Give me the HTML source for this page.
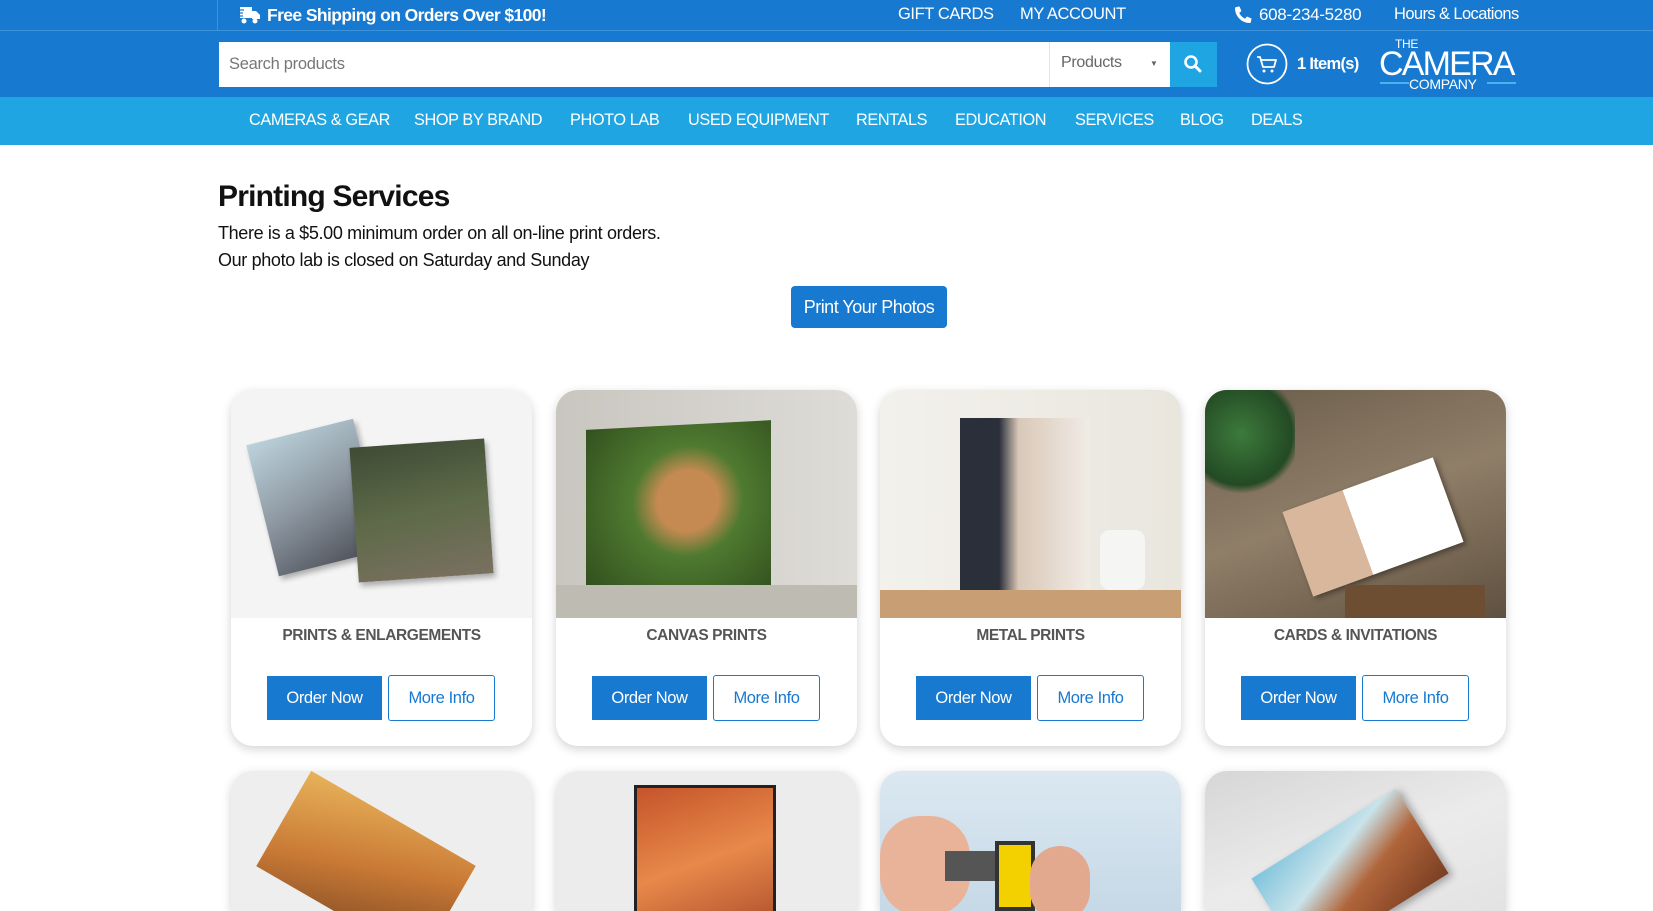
<!DOCTYPE html>
<html style="width:1653px;height:911px;overflow:hidden"><head><meta charset="utf-8"><style>
*{margin:0;padding:0;box-sizing:border-box}
body{width:1653px;height:911px;overflow:hidden;background:#fff;font-family:"Liberation Sans",Arial,sans-serif;position:relative}
.abs{position:absolute}
.top{left:0;top:0;width:1653px;height:31px;background:#1779d0;border-bottom:1px solid #3d92dc}
.hdr{left:0;top:31px;width:1653px;height:66px;background:#1779d0}
.nav{left:0;top:97px;width:1653px;height:48px;background:#1ea5e2}
.t{color:#fff;white-space:nowrap}
.nav .t{top:14px;font-size:16.3px;letter-spacing:-0.4px}
.card{width:301px;height:356px;border-radius:22px;background:#fff;box-shadow:0 3px 10px rgba(0,0,0,.18);overflow:hidden}
.r2{height:140px;border-radius:22px 22px 0 0}
.card .img{position:absolute;left:0;top:0;width:301px;height:228px}
.card .ttl{position:absolute;left:0;top:237px;width:301px;text-align:center;font-weight:bold;font-size:15.5px;color:#555;letter-spacing:-0.4px}
.on{position:absolute;left:36px;top:286px;width:115px;height:44px;background:#1779d0;color:#fff;font-size:16.5px;text-align:center;line-height:44px;letter-spacing:-0.4px}
.mi{position:absolute;left:157px;top:285px;width:107px;height:46px;border:1.5px solid #1779d0;border-radius:3px;color:#1779d0;font-size:16.5px;text-align:center;line-height:45px;letter-spacing:-0.4px}
</style></head><body>
<div class="abs top"></div>
<div class="abs" style="left:217px;top:0;width:1px;height:30px;background:#3d92dc"></div>
<svg class="abs" style="left:237px;top:5px" width="24" height="20" viewBox="0 0 24 20"><path d="M3 2h12v11H3z M15 6h4l4 4v4h-8z" fill="#fff"/><circle cx="7" cy="16" r="2.5" fill="#fff"/><circle cx="18" cy="16" r="2.5" fill="#fff"/><path d="M0 5h7M0 8h6M1 11h5" stroke="#1779d0" stroke-width="1.3"/></svg>
<div class="abs t" style="left:267px;top:5px;font-size:17.5px;font-weight:bold;letter-spacing:-0.6px">Free Shipping on Orders Over $100!</div>
<div class="abs t" style="left:898px;top:5px;font-size:16.5px;letter-spacing:-0.4px">GIFT CARDS</div>
<div class="abs t" style="left:1020px;top:5px;font-size:16.5px;letter-spacing:-0.4px">MY ACCOUNT</div>
<svg class="abs" style="left:1235px;top:6px" width="17" height="17" viewBox="0 0 16 16"><path d="M15 11.5l-3.2-1.4c-.4-.2-.8 0-1 .3l-1.3 1.6C7 10.8 5.2 9 4 6.5l1.6-1.3c.3-.3.4-.7.3-1L4.5 1c-.2-.4-.6-.6-1-.5L.6 1.2C.3 1.3 0 1.6 0 2c0 7.7 6.3 14 14 14 .4 0 .7-.3.8-.6l.7-3c.1-.4-.1-.8-.5-.9z" fill="#fff"/></svg>
<div class="abs t" style="left:1259px;top:5px;font-size:17px;letter-spacing:-0.3px">608-234-5280</div>
<div class="abs t" style="left:1394px;top:5px;font-size:16.5px;letter-spacing:-0.6px">Hours &amp; Locations</div>

<div class="abs hdr"></div>
<div class="abs" style="left:219px;top:42px;width:830px;height:45px;background:#fff"></div>
<div class="abs" style="left:229px;top:55px;font-size:16.5px;color:#777;letter-spacing:-0.3px">Search products</div>
<div class="abs" style="left:1049px;top:42px;width:121px;height:45px;background:#fff;border-left:1px solid #e3e3e3"></div>
<div class="abs" style="left:1061px;top:54px;font-size:16px;color:#666;letter-spacing:-0.3px">Products</div>
<div class="abs" style="left:1150px;top:59px;font-size:8px;color:#666">▼</div>
<div class="abs" style="left:1170px;top:42px;width:47px;height:45px;background:#1ea5e2"></div>
<svg class="abs" style="left:1183px;top:54px" width="20" height="20" viewBox="0 0 20 20"><circle cx="8" cy="8" r="5.5" stroke="#fff" stroke-width="2.6" fill="none"/><path d="M12 12l5 5" stroke="#fff" stroke-width="3" stroke-linecap="round"/></svg>
<svg class="abs" style="left:1246px;top:43px" width="42" height="42" viewBox="0 0 42 42"><circle cx="21" cy="21" r="19.5" stroke="#fff" stroke-width="1.8" fill="none"/><path d="M11 14h3l3 10h11l2-7H15" stroke="#fff" stroke-width="1.8" fill="none" stroke-linejoin="round"/><circle cx="18" cy="28" r="1.5" fill="#fff"/><circle cx="26" cy="28" r="1.5" fill="#fff"/></svg>
<div class="abs t" style="left:1297px;top:55px;font-size:16.5px;font-weight:bold;letter-spacing:-0.7px">1 Item(s)</div>
<div class="abs t" style="left:1395px;top:37px;font-size:12px;letter-spacing:-0.3px">THE</div>
<div class="abs t" style="left:1379px;top:47px;font-size:34px;font-weight:300;letter-spacing:-1.8px;line-height:34px">CAMERA</div>
<div class="abs" style="left:1380px;top:82px;width:29px;height:2px;background:#4db3ec"></div>
<div class="abs" style="left:1487px;top:82px;width:29px;height:2px;background:#4db3ec"></div>
<div class="abs t" style="left:1409px;top:76px;font-size:14px;letter-spacing:-0.3px">COMPANY</div>

<div class="abs nav">
<div class="abs t" style="left:249px">CAMERAS &amp; GEAR</div>
<div class="abs t" style="left:414px">SHOP BY BRAND</div>
<div class="abs t" style="left:570px">PHOTO LAB</div>
<div class="abs t" style="left:688px">USED EQUIPMENT</div>
<div class="abs t" style="left:856px">RENTALS</div>
<div class="abs t" style="left:955px">EDUCATION</div>
<div class="abs t" style="left:1075px">SERVICES</div>
<div class="abs t" style="left:1180px">BLOG</div>
<div class="abs t" style="left:1251px">DEALS</div>
</div>

<div class="abs" style="left:218px;top:180px;font-size:30px;font-weight:bold;color:#111;letter-spacing:-0.8px">Printing Services</div>
<div class="abs" style="left:218px;top:223px;font-size:18px;color:#111;letter-spacing:-0.35px">There is a $5.00 minimum order on all on-line print orders.</div>
<div class="abs" style="left:218px;top:250px;font-size:18px;color:#111;letter-spacing:-0.35px">Our photo lab is closed on Saturday and Sunday</div>
<div class="abs" style="left:791px;top:286px;width:156px;height:42px;background:#1779d0;border-radius:4px;color:#fff;font-size:18px;text-align:center;line-height:42px;letter-spacing:-0.5px">Print Your Photos</div>

<div class="abs card" style="left:231px;top:390px"><div class="img" style="background:#f4f4f4"><div class="abs" style="left:30px;top:40px;width:110px;height:135px;background:linear-gradient(160deg,#bcd3dc,#8c96a0 50%,#4a4d55);transform:rotate(-14deg);box-shadow:2px 4px 6px rgba(0,0,0,.3)"></div><div class="abs" style="left:123px;top:53px;width:135px;height:135px;background:linear-gradient(170deg,#3f4b35,#5d6a48 50%,#7a7060);transform:rotate(-4deg);box-shadow:2px 4px 6px rgba(0,0,0,.3)"></div></div><div class="ttl">PRINTS &amp; ENLARGEMENTS</div><div class="on">Order Now</div><div class="mi">More Info</div></div>
<div class="abs card" style="left:556px;top:390px"><div class="img" style="background:linear-gradient(90deg,#c9c6c0,#dedcd7)"><div class="abs" style="left:30px;top:35px;width:185px;height:170px;background:radial-gradient(circle at 55% 45%,#c58a52 0 22%,#4f7a30 40%,#2e4a1c);transform:skewY(-3deg)"></div><div class="abs" style="left:0;top:195px;width:301px;height:33px;background:#bebbb3"></div></div><div class="ttl">CANVAS PRINTS</div><div class="on">Order Now</div><div class="mi">More Info</div></div>
<div class="abs card" style="left:880px;top:390px"><div class="img" style="background:linear-gradient(90deg,#f3f1ec,#e9e6de)"><div class="abs" style="left:80px;top:28px;width:130px;height:185px;background:linear-gradient(90deg,#2a2f3a 0 30%,#d9c8b8 45%,#f1ece6)"></div><div class="abs" style="left:0;top:200px;width:301px;height:28px;background:#c89f74"></div><div class="abs" style="left:220px;top:140px;width:45px;height:60px;background:#f5f5f3;border-radius:10px"></div></div><div class="ttl">METAL PRINTS</div><div class="on">Order Now</div><div class="mi">More Info</div></div>
<div class="abs card" style="left:1205px;top:390px"><div class="img" style="background:linear-gradient(160deg,#6b5d4c,#8f7e68 50%,#5f5140)"><div class="abs" style="left:0;top:0;width:90px;height:110px;background:radial-gradient(circle at 40% 40%,#3d7a3c,#234a24 60%,transparent 70%)"></div><div class="abs" style="left:88px;top:92px;width:160px;height:90px;background:linear-gradient(90deg,#d9b79d 0 40%,#fff 40%);transform:rotate(-20deg);box-shadow:2px 3px 6px rgba(0,0,0,.4)"></div><div class="abs" style="left:140px;top:195px;width:140px;height:33px;background:#6e4e33"></div></div><div class="ttl">CARDS &amp; INVITATIONS</div><div class="on">Order Now</div><div class="mi">More Info</div></div>

<div class="abs card r2" style="left:231px;top:771px"><div class="img" style="background:#eeeeee"><div class="abs" style="left:40px;top:40px;width:190px;height:110px;background:linear-gradient(160deg,#e8b25a,#c97a35 50%,#7a4524);transform:rotate(30deg)"></div></div></div>
<div class="abs card r2" style="left:556px;top:771px"><div class="img" style="background:#ececec"><div class="abs" style="left:78px;top:14px;width:142px;height:200px;background:linear-gradient(160deg,#c5542a,#e8894a 40%,#8c2f1c);border:3px solid #222"></div></div></div>
<div class="abs card r2" style="left:880px;top:771px"><div class="img" style="background:linear-gradient(180deg,#dbe8f1,#b9cfe0)"><div class="abs" style="left:0;top:45px;width:90px;height:100px;background:#e9b39a;border-radius:40px"></div><div class="abs" style="left:65px;top:80px;width:60px;height:30px;background:#555"></div><div class="abs" style="left:115px;top:70px;width:40px;height:70px;background:#f3d000;border:4px solid #333"></div><div class="abs" style="left:150px;top:75px;width:60px;height:75px;background:#e3a98f;border-radius:30px"></div></div></div>
<div class="abs card r2" style="left:1205px;top:771px"><div class="img" style="background:linear-gradient(160deg,#d6d6d6,#ebebeb 40%,#dcdcdc)"><div class="abs" style="left:60px;top:55px;width:170px;height:100px;background:linear-gradient(160deg,#7ec3dd,#c9e3ea 35%,#b0653a 60%,#7a3e22);transform:rotate(-32deg);box-shadow:3px 4px 8px rgba(0,0,0,.3)"></div></div></div>
</body></html>
